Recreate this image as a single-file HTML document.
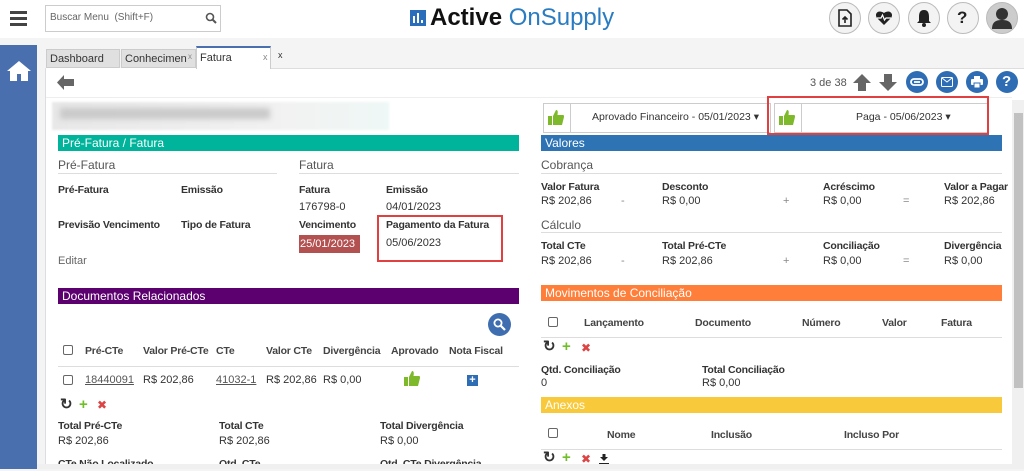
<!DOCTYPE html>
<html><head><meta charset="utf-8"><style>
*{margin:0;padding:0;box-sizing:border-box}
body{width:1024px;height:469px;overflow:hidden;background:#f4f4f4;font-family:"Liberation Sans",sans-serif;font-size:11px;color:#333;position:relative}
.a{position:absolute;white-space:nowrap;line-height:14px}
.b{font-weight:bold;font-size:10.5px;letter-spacing:-0.2px}
.bar{position:absolute;color:#fff;font-size:12px;line-height:16px;padding-left:4px}
.ln{position:absolute;height:1px;background:#ddd}
.cb{position:absolute;width:10px;height:10px;border:1px solid #666;border-radius:2px;background:#fff}
.circ{position:absolute;width:32px;height:32px;border-radius:50%;border:1px solid #bbb;background:#f3f3f3}
.bc{position:absolute;width:22px;height:22px;border-radius:50%;background:#2e6db4}
.g{color:#888}
</style></head><body>
<div style="position:absolute;left:0;top:0;width:1024px;height:38px;background:#fff"></div>
<div style="position:absolute;left:10px;top:11px;width:17px;height:3px;background:#444;box-shadow:0 6px 0 #444,0 12px 0 #444"></div>
<div style="position:absolute;left:45px;top:5px;width:176px;height:27px;border:1px solid #ccc;background:#fff"></div>
<div class="a" style="left:50px;top:11px;font-size:10px;color:#666">Buscar Menu&nbsp; (Shift+F)</div>
<svg style="position:absolute;left:205px;top:12px" width="12" height="12"><circle cx="5" cy="5" r="3.5" stroke="#555" stroke-width="1.6" fill="none"/><line x1="7.5" y1="7.5" x2="11" y2="11" stroke="#555" stroke-width="2"/></svg>
<svg style="position:absolute;left:410px;top:10px" width="16" height="16"><rect width="16" height="16" fill="#2a6ebb"/><rect x="3" y="6" width="2" height="7" fill="#fff"/><rect x="7" y="3" width="2" height="10" fill="#fff"/><rect x="11" y="10" width="2" height="3" fill="#fff"/></svg>
<div class="a" style="left:430px;top:4px;font-size:24px;line-height:28px;font-weight:bold;color:#111">Active <span style="font-weight:normal;color:#2a7cc2">OnSupply</span></div>
<div class="circ" style="left:829px;top:2px"></div>
<svg style="position:absolute;left:838px;top:9px" width="14" height="18"><path d="M1 1h8l4 4v12H1z" fill="none" stroke="#222" stroke-width="1.6"/><path d="M7 14V8M4.5 10.5L7 8l2.5 2.5" stroke="#222" stroke-width="1.6" fill="none"/></svg>
<div class="circ" style="left:868px;top:2px"></div>
<svg style="position:absolute;left:875px;top:10px" width="18" height="16"><path d="M9 15L2 8C-1 4 3-1 9 3c6-4 10 1 7 5z" fill="#222"/><path d="M2 8h4l1.5-3 2 5 1.5-2h5" stroke="#fff" stroke-width="1.2" fill="none"/></svg>
<div class="circ" style="left:908px;top:2px"></div>
<svg style="position:absolute;left:917px;top:9px" width="14" height="18"><path d="M7 1c-4 0-5 3-5 7v4l-2 2h14l-2-2V8c0-4-1-7-5-7z" fill="#222"/><circle cx="7" cy="16" r="2" fill="#222"/></svg>
<div class="circ" style="left:947px;top:2px"></div>
<div class="a" style="left:957px;top:9px;font-size:17px;line-height:18px;color:#222;font-weight:bold">?</div>
<div class="circ" style="left:986px;top:2px;background:#ccc"></div>
<svg style="position:absolute;left:992px;top:7px" width="20" height="24"><circle cx="10" cy="7" r="6" fill="#333"/><path d="M0 22c0-7 4-9 10-9s10 2 10 9z" fill="#333"/></svg>

<div style="position:absolute;left:0;top:45px;width:37px;height:424px;background:#4a6fae"></div>
<svg style="position:absolute;left:6px;top:60px" width="26" height="22"><path d="M13 1L1 11h3v10h18V11h3z" fill="#fff"/><rect x="11" y="14" width="4" height="7" fill="#4a6fae"/></svg>

<div style="position:absolute;left:45px;top:68px;width:979px;height:396px;background:#fff;border-left:1px solid #ddd"></div>
<div style="position:absolute;left:46px;top:49px;width:74px;height:19px;background:#e0e0e0;border:1px solid #ccc"></div>
<div class="a" style="left:50px;top:52px">Dashboard</div>
<div style="position:absolute;left:121px;top:49px;width:75px;height:19px;background:#e0e0e0;border:1px solid #ccc;overflow:hidden"></div>
<div class="a" style="left:125px;top:52px;width:62px;overflow:hidden">Conheciment</div><div class="a g" style="left:188px;top:50px;font-size:8px">x</div>
<div style="position:absolute;left:196px;top:46px;width:75px;height:23px;background:#fff;border:1px solid #ccc;border-top:2px solid #4a6fae;border-bottom:none"></div>
<div class="a" style="left:200px;top:51px">Fatura</div><div class="a g" style="left:263px;top:50px;font-size:9px">x</div>
<div class="a" style="left:278px;top:48px;font-size:9px">x</div>
<div class="ln" style="left:271px;top:68px;width:753px"></div>

<svg style="position:absolute;left:57px;top:75px" width="17" height="15"><path d="M0 7.5L7 0v4h10v7H7v4z" fill="#666"/></svg>
<div class="a" style="left:810px;top:76px;color:#555">3 de 38</div>
<svg style="position:absolute;left:853px;top:74px" width="18" height="17"><path d="M9 0L18 9h-5v8H5V9H0z" fill="#666"/></svg>
<svg style="position:absolute;left:879px;top:74px" width="18" height="17"><path d="M9 17L18 8h-5V0H5v8H0z" fill="#666"/></svg>
<div class="bc" style="left:906px;top:71px"></div>
<svg style="position:absolute;left:910px;top:77px" width="14" height="10"><rect x="1" y="2" width="12" height="6" rx="3" fill="none" stroke="#fff" stroke-width="1.8"/><line x1="4" y1="5" x2="10" y2="5" stroke="#fff" stroke-width="1.8"/></svg>
<div class="bc" style="left:936px;top:71px"></div>
<svg style="position:absolute;left:941px;top:77px" width="12" height="10"><rect x=".5" y=".5" width="11" height="9" rx="1" fill="none" stroke="#fff"/><path d="M1 1l5 4 5-4" fill="none" stroke="#fff"/></svg>
<div class="bc" style="left:966px;top:71px"></div>
<svg style="position:absolute;left:971px;top:76px" width="12" height="12"><rect x="3" y="0" width="6" height="3" fill="#fff"/><rect x="0" y="3" width="12" height="6" rx="1" fill="#fff"/><rect x="3" y="7" width="6" height="5" fill="#fff" stroke="#2e6db4"/></svg>
<div class="bc" style="left:996px;top:71px"></div>
<div class="a" style="left:1002px;top:74px;color:#fff;font-size:15px;line-height:16px;font-weight:bold">?</div>
<div class="ln" style="left:46px;top:97px;width:966px;background:#eee"></div>

<div style="position:absolute;left:52px;top:102px;width:337px;height:28px;background:linear-gradient(90deg,#e8e8e8,#f2f2f2 70%,#eef8f6);filter:blur(1px)"></div>
<div style="position:absolute;left:60px;top:108px;width:210px;height:11px;background:#c9c9c9;filter:blur(3px)"></div>

<div class="bar" style="left:58px;top:135px;width:461px;background:#00b39b">Pré-Fatura / Fatura</div>
<div class="a g" style="left:58px;top:158px;font-size:12px;color:#555">Pré-Fatura</div>
<div class="ln" style="left:58px;top:173px;width:219px"></div>
<div class="a" style="left:299px;top:158px;font-size:12px;color:#555">Fatura</div>
<div class="ln" style="left:299px;top:173px;width:220px"></div>
<div class="a b" style="left:58px;top:183px">Pré-Fatura</div>
<div class="a b" style="left:181px;top:183px">Emissão</div>
<div class="a b" style="left:299px;top:183px">Fatura</div>
<div class="a b" style="left:386px;top:183px">Emissão</div>
<div class="a" style="left:299px;top:200px">176798-0</div>
<div class="a" style="left:386px;top:200px">04/01/2023</div>
<div class="a b" style="left:58px;top:218px">Previsão Vencimento</div>
<div class="a b" style="left:181px;top:218px">Tipo de Fatura</div>
<div class="a b" style="left:299px;top:218px">Vencimento</div>
<div class="a b" style="left:386px;top:218px">Pagamento da Fatura</div>
<div class="a" style="left:299px;top:235px;width:61px;height:18px;line-height:18px;background:#b35050;color:#fff;padding-left:1px">25/01/2023</div>
<div class="a" style="left:386px;top:236px">05/06/2023</div>
<div style="position:absolute;left:377px;top:215px;width:126px;height:47px;border:2px solid #e04040"></div>
<div class="a" style="left:58px;top:254px;color:#666">Editar</div>

<div class="bar" style="left:58px;top:288px;width:461px;background:#5c0070">Documentos Relacionados</div>
<div style="position:absolute;left:488px;top:313px;width:23px;height:23px;border-radius:50%;background:#3e6db0"></div>
<svg style="position:absolute;left:493px;top:318px" width="13" height="13"><circle cx="5" cy="5" r="3.6" stroke="#fff" stroke-width="1.8" fill="none"/><line x1="7.8" y1="7.8" x2="12" y2="12" stroke="#fff" stroke-width="2.2"/></svg>
<div class="cb" style="left:63px;top:345px"></div>
<div class="a b" style="left:85px;top:344px;color:#444">Pré-CTe</div>
<div class="a b" style="left:143px;top:344px;color:#444">Valor Pré-CTe</div>
<div class="a b" style="left:216px;top:344px;color:#444">CTe</div>
<div class="a b" style="left:266px;top:344px;color:#444">Valor CTe</div>
<div class="a b" style="left:323px;top:344px;color:#444">Divergência</div>
<div class="a b" style="left:391px;top:344px;color:#444">Aprovado</div>
<div class="a b" style="left:449px;top:344px;color:#444">Nota Fiscal</div>
<div class="ln" style="left:58px;top:366px;width:461px"></div>
<div class="cb" style="left:63px;top:375px"></div>
<div class="a" style="left:85px;top:373px;text-decoration:underline;color:#555">18440091</div>
<div class="a" style="left:143px;top:373px">R$ 202,86</div>
<div class="a" style="left:216px;top:373px;text-decoration:underline;color:#555">41032-1</div>
<div class="a" style="left:266px;top:373px">R$ 202,86</div>
<div class="a" style="left:323px;top:373px">R$ 0,00</div>
<svg style="position:absolute;left:404px;top:371px" width="16" height="15"><rect x="0" y="6" width="4" height="9" fill="#7db92a"/><path d="M5 6l3-6c2 0 2 2 1.5 5H15c1 0 1 1 1 2l-2 8H5z" fill="#7db92a"/></svg>
<div style="position:absolute;left:467px;top:375px;width:11px;height:11px;background:#2e6db4;color:#fff;font-size:11px;line-height:10px;text-align:center;font-weight:bold">+</div>
<div class="a" style="left:60px;top:398px;font-size:15px;font-weight:bold">&#x21bb;</div>
<div class="a" style="left:79px;top:398px;font-size:15px;color:#6fbe2a;font-weight:bold">+</div>
<div class="a" style="left:97px;top:398px;font-size:12px;color:#d44">✖</div>
<div class="a b" style="left:58px;top:419px">Total Pré-CTe</div><div class="a" style="left:58px;top:434px">R$ 202,86</div>
<div class="a b" style="left:219px;top:419px">Total CTe</div><div class="a" style="left:219px;top:434px">R$ 202,86</div>
<div class="a b" style="left:380px;top:419px">Total Divergência</div><div class="a" style="left:380px;top:434px">R$ 0,00</div>
<div class="a b" style="left:58px;top:457px">CTe Não Localizado</div>
<div class="a b" style="left:219px;top:457px">Qtd. CTe</div>
<div class="a b" style="left:380px;top:457px">Qtd. CTe Divergência</div>

<!-- right -->
<div style="position:absolute;left:543px;top:103px;width:228px;height:30px;border:1px solid #ccc"></div>
<div style="position:absolute;left:570px;top:103px;width:1px;height:30px;background:#ccc"></div>
<svg style="position:absolute;left:548px;top:110px" width="16" height="15"><rect x="0" y="6" width="4" height="9" fill="#7db92a"/><path d="M5 6l3-6c2 0 2 2 1.5 5H15c1 0 1 1 1 2l-2 8H5z" fill="#7db92a"/></svg>
<div class="a" style="left:592px;top:110px;font-size:10.5px">Aprovado Financeiro - 05/01/2023 ▾</div>
<div style="position:absolute;left:774px;top:103px;width:214px;height:30px;border:1px solid #ccc"></div>
<div style="position:absolute;left:801px;top:103px;width:1px;height:30px;background:#ccc"></div>
<svg style="position:absolute;left:779px;top:110px" width="16" height="15"><rect x="0" y="6" width="4" height="9" fill="#7db92a"/><path d="M5 6l3-6c2 0 2 2 1.5 5H15c1 0 1 1 1 2l-2 8H5z" fill="#7db92a"/></svg>
<div class="a" style="left:856px;top:110px;font-size:10.5px">Paga - 05/06/2023 ▾</div>
<div style="position:absolute;left:767px;top:96px;width:222px;height:39px;border:2px solid #e04040"></div>

<div class="bar" style="left:541px;top:135px;width:461px;background:#2e74b5">Valores</div>
<div class="a" style="left:541px;top:158px;font-size:12px;color:#555">Cobrança</div>
<div class="ln" style="left:541px;top:173px;width:461px"></div>
<div class="a b" style="left:541px;top:180px">Valor Fatura</div><div class="a" style="left:541px;top:194px">R$ 202,86</div>
<div class="a g" style="left:621px;top:194px">-</div>
<div class="a b" style="left:662px;top:180px">Desconto</div><div class="a" style="left:662px;top:194px">R$ 0,00</div>
<div class="a g" style="left:783px;top:194px">+</div>
<div class="a b" style="left:823px;top:180px">Acréscimo</div><div class="a" style="left:823px;top:194px">R$ 0,00</div>
<div class="a g" style="left:903px;top:194px">=</div>
<div class="a b" style="left:944px;top:180px">Valor a Pagar</div><div class="a" style="left:944px;top:194px">R$ 202,86</div>
<div class="a" style="left:541px;top:218px;font-size:12px;color:#555">Cálculo</div>
<div class="ln" style="left:541px;top:232px;width:461px"></div>
<div class="a b" style="left:541px;top:239px">Total CTe</div><div class="a" style="left:541px;top:254px">R$ 202,86</div>
<div class="a g" style="left:621px;top:254px">-</div>
<div class="a b" style="left:662px;top:239px">Total Pré-CTe</div><div class="a" style="left:662px;top:254px">R$ 202,86</div>
<div class="a g" style="left:783px;top:254px">+</div>
<div class="a b" style="left:823px;top:239px">Conciliação</div><div class="a" style="left:823px;top:254px">R$ 0,00</div>
<div class="a g" style="left:903px;top:254px">=</div>
<div class="a b" style="left:944px;top:239px">Divergência</div><div class="a" style="left:944px;top:254px">R$ 0,00</div>

<div class="bar" style="left:541px;top:285px;width:461px;background:#ff7f3a">Movimentos de Conciliação</div>
<div class="cb" style="left:548px;top:317px"></div>
<div class="a b" style="left:584px;top:316px;color:#444">Lançamento</div>
<div class="a b" style="left:695px;top:316px;color:#444">Documento</div>
<div class="a b" style="left:802px;top:316px;color:#444">Número</div>
<div class="a b" style="left:882px;top:316px;color:#444">Valor</div>
<div class="a b" style="left:941px;top:316px;color:#444">Fatura</div>
<div class="ln" style="left:541px;top:337px;width:461px"></div>
<div class="a" style="left:543px;top:340px;font-size:15px;font-weight:bold">&#x21bb;</div>
<div class="a" style="left:562px;top:340px;font-size:15px;color:#6fbe2a;font-weight:bold">+</div>
<div class="a" style="left:581px;top:341px;font-size:12px;color:#d44">✖</div>
<div class="a b" style="left:541px;top:363px">Qtd. Conciliação</div><div class="a" style="left:541px;top:376px">0</div>
<div class="a b" style="left:702px;top:363px">Total Conciliação</div><div class="a" style="left:702px;top:376px">R$ 0,00</div>
<div class="bar" style="left:541px;top:397px;width:461px;background:#f9c93c">Anexos</div>
<div class="cb" style="left:548px;top:428px"></div>
<div class="a b" style="left:607px;top:428px;color:#444">Nome</div>
<div class="a b" style="left:711px;top:428px;color:#444">Inclusão</div>
<div class="a b" style="left:844px;top:428px;color:#444">Incluso Por</div>
<div class="ln" style="left:541px;top:449px;width:461px"></div>
<div class="a" style="left:543px;top:451px;font-size:15px;font-weight:bold">&#x21bb;</div>
<div class="a" style="left:562px;top:451px;font-size:15px;color:#6fbe2a;font-weight:bold">+</div>
<div class="a" style="left:581px;top:452px;font-size:12px;color:#d44">✖</div>
<svg style="position:absolute;left:599px;top:454px" width="10" height="11"><path d="M5 7L1 3h2.5V0h3v3H9z" fill="#222"/><rect x="0" y="9" width="10" height="2" fill="#222"/></svg>

<div style="position:absolute;left:1012px;top:100px;width:12px;height:364px;background:#f0f0f0"></div>
<div style="position:absolute;left:1014px;top:113px;width:9px;height:275px;background:#c1c1c1"></div>
<div style="position:absolute;left:0;top:464px;width:1024px;height:5px;background:#f0f0f0"></div>
<div style="position:absolute;left:0;top:464px;width:37px;height:5px;background:#4a6fae"></div>
</body></html>
